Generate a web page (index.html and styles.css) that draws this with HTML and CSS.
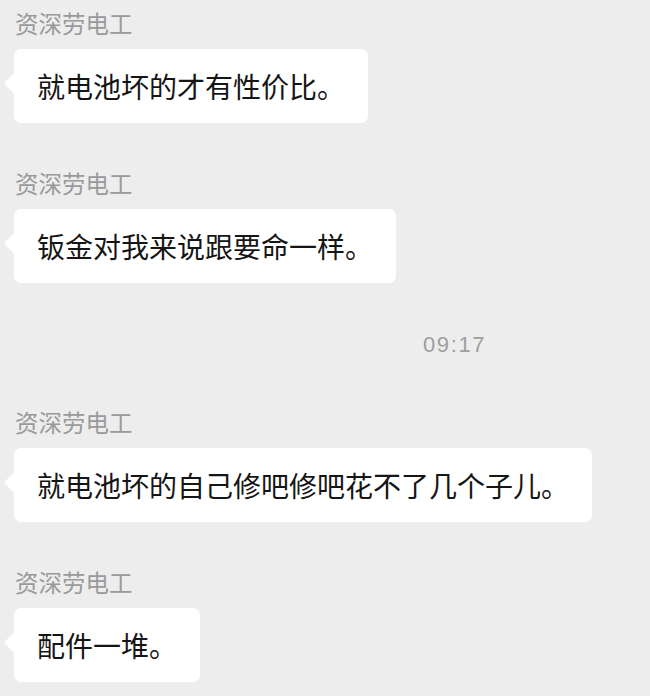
FILE: index.html
```html
<!DOCTYPE html>
<html lang="zh-CN">
<head>
<meta charset="utf-8">
<title>聊天记录</title>
<link rel="stylesheet" href="styles.css">
</head>
<body>
<main class="chat">
  <section class="msg">
    <div class="name">资深劳电工</div>
    <div class="bubble">就电池坏的才有性价比。</div>
  </section>
  <section class="msg">
    <div class="name">资深劳电工</div>
    <div class="bubble">钣金对我来说跟要命一样。</div>
  </section>
  <div class="time">09:17</div>
  <section class="msg">
    <div class="name">资深劳电工</div>
    <div class="bubble">就电池坏的自己修吧修吧花不了几个子儿。</div>
  </section>
  <section class="msg">
    <div class="name">资深劳电工</div>
    <div class="bubble">配件一堆。</div>
  </section>
</main>
</body>
</html>
```
FILE: styles.css
```css
html, body {
  margin: 0;
  padding: 0;
  background: #ededed;
}
body {
  width: 650px;
  height: 696px;
  overflow: hidden;
  font-family: "Noto Sans CJK SC", "Noto Sans", sans-serif;
}
.chat {
  display: flex;
  flex-direction: column;
  gap: 43px;
  padding: 6px 0 0 14px;
}
.msg {
  display: flex;
  flex-direction: column;
  align-items: flex-start;
  gap: 9px;
}
.name {
  font-size: 23.5px;
  line-height: 34px;
  height: 34px;
  color: #9a9a9a;
  padding-left: 1px;
}
.bubble {
  position: relative;
  background: #ffffff;
  border-radius: 7px;
  padding: 17px 23px 17px 23px;
  font-size: 28px;
  line-height: 40px;
  height: 40px;
  color: #151515;
  white-space: nowrap;
}
.bubble::before {
  content: "";
  position: absolute;
  left: -7px;
  top: 27px;
  width: 15px;
  height: 15px;
  background: #ffffff;
  border-radius: 2px;
  transform: rotate(45deg);
}
.time {
  margin-top: 2px;
  margin-left: 409px;
  font-family: "Liberation Sans", Arial, sans-serif;
  font-size: 22px;
  line-height: 34px;
  height: 34px;
  letter-spacing: 1.6px;
  color: #9e9e9e;
}
```
